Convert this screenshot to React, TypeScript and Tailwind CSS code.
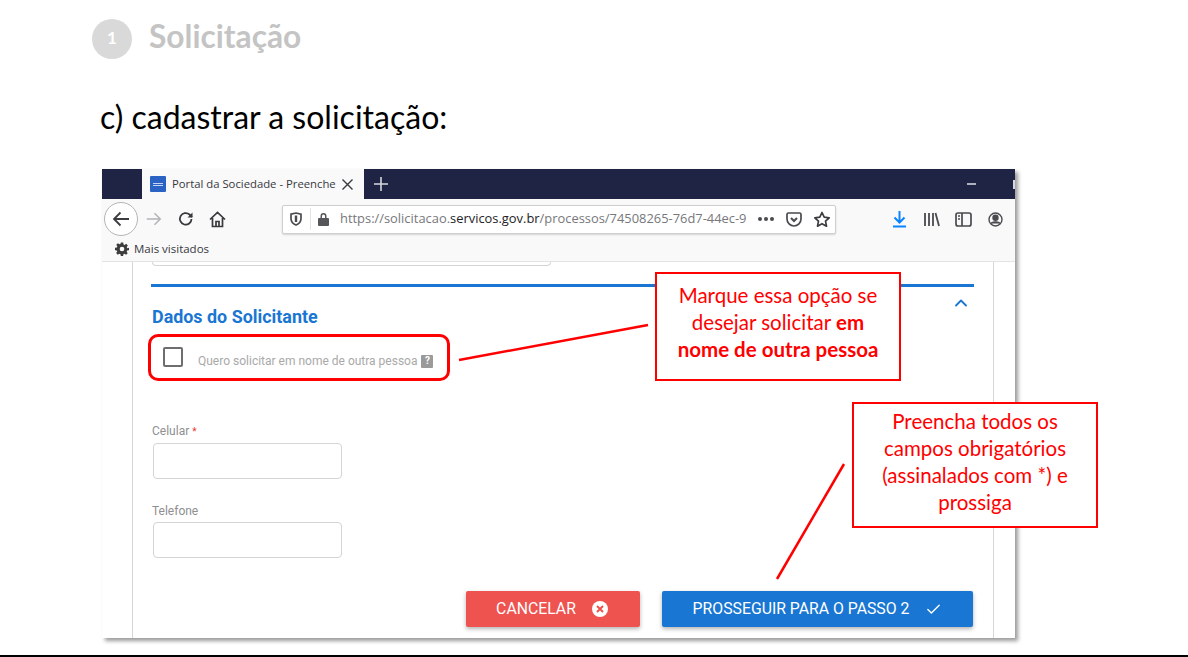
import React from "react";
import { ChevronUp, Check } from "lucide-react";

function Nav() {
  return (
    <div className="flex h-[40px] items-center bg-[#f9f9fa] relative">
      <div className="ml-[2px] flex h-[34px] w-[34px] items-center justify-center rounded-full border border-[#b5b5b5] bg-white">
        <svg width="20" height="20" viewBox="0 0 20 20" fill="none" stroke="#3c3c3f" strokeWidth="1.8"><path d="M18 10H3M9.5 3.5 3 10l6.500 6.500" /></svg>
      </div>
      <svg className="ml-[7px]" width="18" height="18" viewBox="0 0 20 20" fill="none" stroke="#b3b3b5" strokeWidth="1.6"><path d="M2 10h15M10.500 3.500 17 10l-6.500 6.500" /></svg>
      <svg className="ml-[15px]" width="16" height="16" viewBox="0 0 16 16" fill="none" stroke="#38383d" strokeWidth="1.8"><path d="M13.500 8A5.800 5.800 0 1 1 11.500 3.500L14 6" /><path d="M14.500 1.500V6.500H9.500" fill="#38383d" stroke="none" /></svg>
      <svg className="ml-[15px]" width="17" height="17" viewBox="0 0 17 17" fill="none" stroke="#38383d" strokeWidth="1.7"><path d="M1 8.500 8.500 1.500 16 8.500M3.500 7v8.500h10V7M7 15.500V10.500h3v5" /></svg>
      <div className="ml-[56px] flex h-[29px] w-[554px] items-center rounded-[2px] border border-[#cfcfd1] bg-white shadow-[0_1px_2px_rgba(0,0,0,0.15)]">
        <svg className="ml-[7px]" width="12" height="14" viewBox="0 0 12 14" fill="none" stroke="#4a4a4f" strokeWidth="1.700"><path d="M1 2.200 6 1l5 1.200v4.300C11 10 8.500 12 6 13 3.500 12 1 10 1 6.500Z" /><path d="M6 3.500v6.500" strokeWidth="2.400" /></svg>
        <div className="ml-[8px] h-[22px] w-px bg-[#e3e3e3]" />
        <svg className="ml-[6px]" width="13" height="14" viewBox="0 0 13 14" fill="#55555a"><path d="M3.500 6V4a3 3 0 0 1 6 0v2h1.500a1 1 0 0 1 1 1v6a1 1 0 0 1-1 1H2a1 1 0 0 1-1-1V7a1 1 0 0 1 1-1Zm1.500 0h3V4a1.500 1.500 0 0 0-3 0Z" /></svg>
        <div className="ml-[10px] w-[410px] whitespace-nowrap font-['Open_Sans',sans-serif] text-[12.900px] text-[#77777c]">
          https://solicitacao.<span className="text-[#222226]">servicos.gov.br</span>/processos/74508265-76d7-44ec-9
        </div>
        <div className="ml-[8px] flex gap-[2px]">
          <span className="h-[4px] w-[4px] rounded-full bg-[#4a4a4f]" />
          <span className="h-[4px] w-[4px] rounded-full bg-[#4a4a4f]" />
          <span className="h-[4px] w-[4px] rounded-full bg-[#4a4a4f]" />
        </div>
        <svg className="ml-[12px]" width="16" height="15" viewBox="0 0 16 15" fill="none" stroke="#4a4a4f" strokeWidth="1.700"><path d="M1 2.500A1.500 1.500 0 0 1 2.500 1h11A1.500 1.500 0 0 1 15 2.500V7a7 7 0 0 1-14 0Z" /><path d="M5 6l3 3 3-3" strokeWidth="2" /></svg>
        <svg className="ml-[11px]" width="18" height="17" viewBox="0 0 18 17" fill="none" stroke="#3c3c40" strokeWidth="1.700" strokeLinejoin="round"><path d="M9 1.500 11.200 6.200l5 .6-3.700 3.400 1 5L9 12.700l-4.500 2.500 1-5L1.800 6.800l5-.6Z" /></svg>
      </div>
      <svg className="ml-[56px]" width="15" height="18" viewBox="0 0 15 18" fill="none" stroke="#0a84ff" strokeWidth="2"><path d="M7.500 1v11M2.500 7.500l5 5 5-5M1 16.500h13" /></svg>
      <svg className="ml-[16px]" width="17" height="15" viewBox="0 0 17 15" fill="none" stroke="#4a4a4f" strokeWidth="1.800"><path d="M2 1v13M6 1v13M10 1v13M12.500 1 16 14" /></svg>
      <svg className="ml-[15px]" width="17" height="15" viewBox="0 0 17 15" fill="none" stroke="#4a4a4f" strokeWidth="1.700"><rect x="1" y="1" width="15" height="13" rx="2" /><path d="M7 1v13" /><path d="M3 4h2M3 7h2" strokeWidth="1.300" /></svg>
      <svg className="ml-[16px]" width="15" height="15" viewBox="0 0 15 15" fill="none" stroke="#4a4a4f" strokeWidth="1.400"><circle cx="7.500" cy="7.500" r="6.500" /><circle cx="7.500" cy="5.700" r="2.500" fill="#4a4a4f" /><path d="M3 11.500c1-2.200 8-2.200 9 0" fill="#4a4a4f" /></svg>
    </div>
  );
}

function Field({ label, star, mt }: { label: string; star?: boolean; mt: string }) {
  return (
    <div className={`${mt} ml-[1px]`}>
      <div className="font-['Roboto',sans-serif] text-[12px] leading-[14px] text-[#8f8f8f]">
        {label}
        {star && <span className="ml-[3px] text-[10px] text-[#e53935]">*</span>}
      </div>
      <div className="ml-[1px] mt-[4px] h-[36px] w-[189px] rounded-[4px] border border-[#d5d5d5] bg-white" />
    </div>
  );
}

function Browser() {
  return (
    <section className="ml-[102px] mt-[29px] flex h-[469px] w-[913px] flex-col overflow-hidden bg-white shadow-[3px_3px_4px_rgba(0,0,0,0.4)]">
      <div className="flex h-[30px] items-stretch bg-[#1f2444]">
        <div className="ml-[40px] flex w-[222px] items-center bg-[#f9f9fa] px-[8px]">
          <span className="flex h-[16px] w-[16px] flex-col items-center justify-center gap-px rounded-[1px] bg-[#2b63c4]">
            <span className="h-px w-[10px] bg-[#c5d5f0]" />
            <span className="h-px w-[10px] bg-[#c5d5f0]" />
          </span>
          <span className="ml-[6px] w-[163px] whitespace-nowrap font-['Open_Sans',sans-serif] text-[11.300px] text-[#38383d]">Portal da Sociedade - Preenche</span>
          <svg className="ml-[7px]" width="11" height="11" viewBox="0 0 11 11" stroke="#38383d" strokeWidth="1.400"><path d="M.5.500l10 10M10.500.500l-10 10" /></svg>
        </div>
        <div className="ml-[10px] flex items-center">
          <svg width="14" height="14" viewBox="0 0 14 14" stroke="#d7d8de" strokeWidth="1.600"><path d="M7 0v14M0 7h14" /></svg>
        </div>
        <div className="ml-auto flex items-center">
          <span className="h-[1.500px] w-[9px] bg-[#aeb0bd]" />
          <span className="ml-[37px] h-[9px] w-[2px] bg-[#d7d8de]" />
        </div>
      </div>
      <Nav />
      <div className="flex h-[23px] items-center border-b border-[#e3e3e3] bg-[#f9f9fa] pb-[3px] pl-[13px]">
        <svg width="14" height="14" viewBox="0 0 24 24" fill="#3d3d3d"><path fillRule="evenodd" d="M10 1h4l.6 3.200 1.900.8 2.700-1.800 2.800 2.800-1.800 2.700.8 1.900L24 10v4l-3.200.6-.8 1.900 1.800 2.700-2.800 2.800-2.700-1.800-1.900.8L14 24h-4l-.6-3.200-1.900-.8-2.700 1.800-2.800-2.800 1.800-2.700-.8-1.900L0 14v-4l3.200-.6.800-1.900-1.800-2.700 2.800-2.800 2.700 1.800 1.900-.8ZM12 8a4 4 0 1 0 0 8 4 4 0 0 0 0-8Z" /></svg>
        <span className="ml-[5px] font-['Open_Sans',sans-serif] text-[11.500px] text-[#38383d]">Mais visitados</span>
      </div>
      <div className="ml-[30px] flex min-h-0 w-[862px] flex-1 flex-col border-x border-[#d6d6d6] px-[18px]">
        <div className="ml-[1px] h-[4px] w-[399px] rounded-b-[4px] border border-t-0 border-[#d5d5d5]" />
        <div className="mt-[18px] h-[3px] w-[823px] bg-[#1976d2]" />
        <div className="mt-[6px] flex w-[823px] items-start justify-between">
          <h2 className="ml-[1px] mt-[12px] font-['Roboto',sans-serif] text-[17.900px] font-bold leading-[24px] text-[#1976d2]">Dados do Solicitante</h2>
          <ChevronUp className="mr-[3px] text-[#1976d2]" size={20} strokeWidth={2.200} />
        </div>
        <div className="mt-[17px] flex items-center">
          <span className="ml-[12px] h-[20px] w-[20px] rounded-[2px] border-2 border-[#6e6e6e] bg-white" />
          <span className="ml-[15px] mt-[8px] font-['Roboto',sans-serif] text-[12px] leading-[14px] text-[#a9a9a9]">Quero solicitar em nome de outra pessoa</span>
          <span className="ml-[4px] mt-[8px] flex h-[13px] w-[12px] items-center justify-center rounded-[1px] bg-[#9a9a9a] font-['Roboto',sans-serif] text-[10px] font-bold leading-none text-white">?</span>
        </div>
        <Field label="Celular" star mt="mt-[56px]" />
        <Field label="Telefone" mt="mt-[25px]" />
        <div className="mt-[33px] flex w-[822px] justify-end gap-[22px] font-['Roboto',sans-serif] text-[15.800px] font-normal text-white">
          <button className="flex h-[36px] w-[174px] items-center justify-center gap-[16px] rounded-[2px] bg-[#ef5350] pr-[2px] shadow-[0_2px_4px_rgba(0,0,0,0.3)]">
            CANCELAR
            <span className="flex h-[16px] w-[16px] items-center justify-center rounded-full bg-white">
              <svg width="8" height="8" viewBox="0 0 8 8" stroke="#ef5350" strokeWidth="2"><path d="M1 1l6 6M7 1 1 7" /></svg>
            </span>
          </button>
          <button className="flex h-[36px] w-[311px] items-center justify-center gap-[16px] rounded-[2px] bg-[#1976d2] shadow-[0_2px_4px_rgba(0,0,0,0.3)]">
            PROSSEGUIR PARA O PASSO 2
            <Check size={17} strokeWidth={2} />
          </button>
        </div>
      </div>
    </section>
  );
}

export default function App() {
  const callout = "absolute flex flex-col items-center justify-center border-2 border-[#ff0000] bg-white text-center font-['Lato',sans-serif] text-[20.500px] leading-[27px] text-[#ff0000]";
  return (
    <main className="relative h-[657px] w-[1188px] overflow-hidden border-b-2 border-black bg-white">
      <header className="flex items-start pl-[92px] pt-[19px]">
        <span className="flex h-[40px] w-[40px] items-center justify-center rounded-full bg-[#d9d9d9] pb-[3px] font-['Lato',sans-serif] text-[17px] font-bold text-white">1</span>
        <span className="-mt-[1px] ml-[17px] font-['Lato',sans-serif] text-[31.700px] font-bold leading-[36px] text-[#c4c4c4]">Solicitação</span>
      </header>
      <h1 className="ml-[100px] mt-[35px] font-['Lato',sans-serif] text-[32px] font-normal leading-[46px] text-black">c) cadastrar a solicitação:</h1>
      <Browser />

      <div className="absolute left-[148px] top-[334px] h-[47px] w-[302px] rounded-[10px] border-[3px] border-[#ff0000]" />
      <svg className="absolute left-0 top-0" width="1188" height="657" fill="none" stroke="#ff0000" strokeWidth="2.500">
        <path d="M459 360 648 325" />
        <path d="M777 579 844 464" />
      </svg>
      <div className={`${callout} left-[655px] top-[272px] h-[109px] w-[246px] pb-[8px]`}>
        <div>Marque essa opção se</div>
        <div>desejar solicitar <b>em</b></div>
        <div><b>nome de outra pessoa</b></div>
      </div>
      <div className={`${callout} left-[852px] top-[402px] h-[126px] w-[246px] pb-[6px]`}>
        <div>Preencha todos os</div>
        <div>campos obrigatórios</div>
        <div>(assinalados com *) e</div>
        <div>prossiga</div>
      </div>
    </main>
  );
}
